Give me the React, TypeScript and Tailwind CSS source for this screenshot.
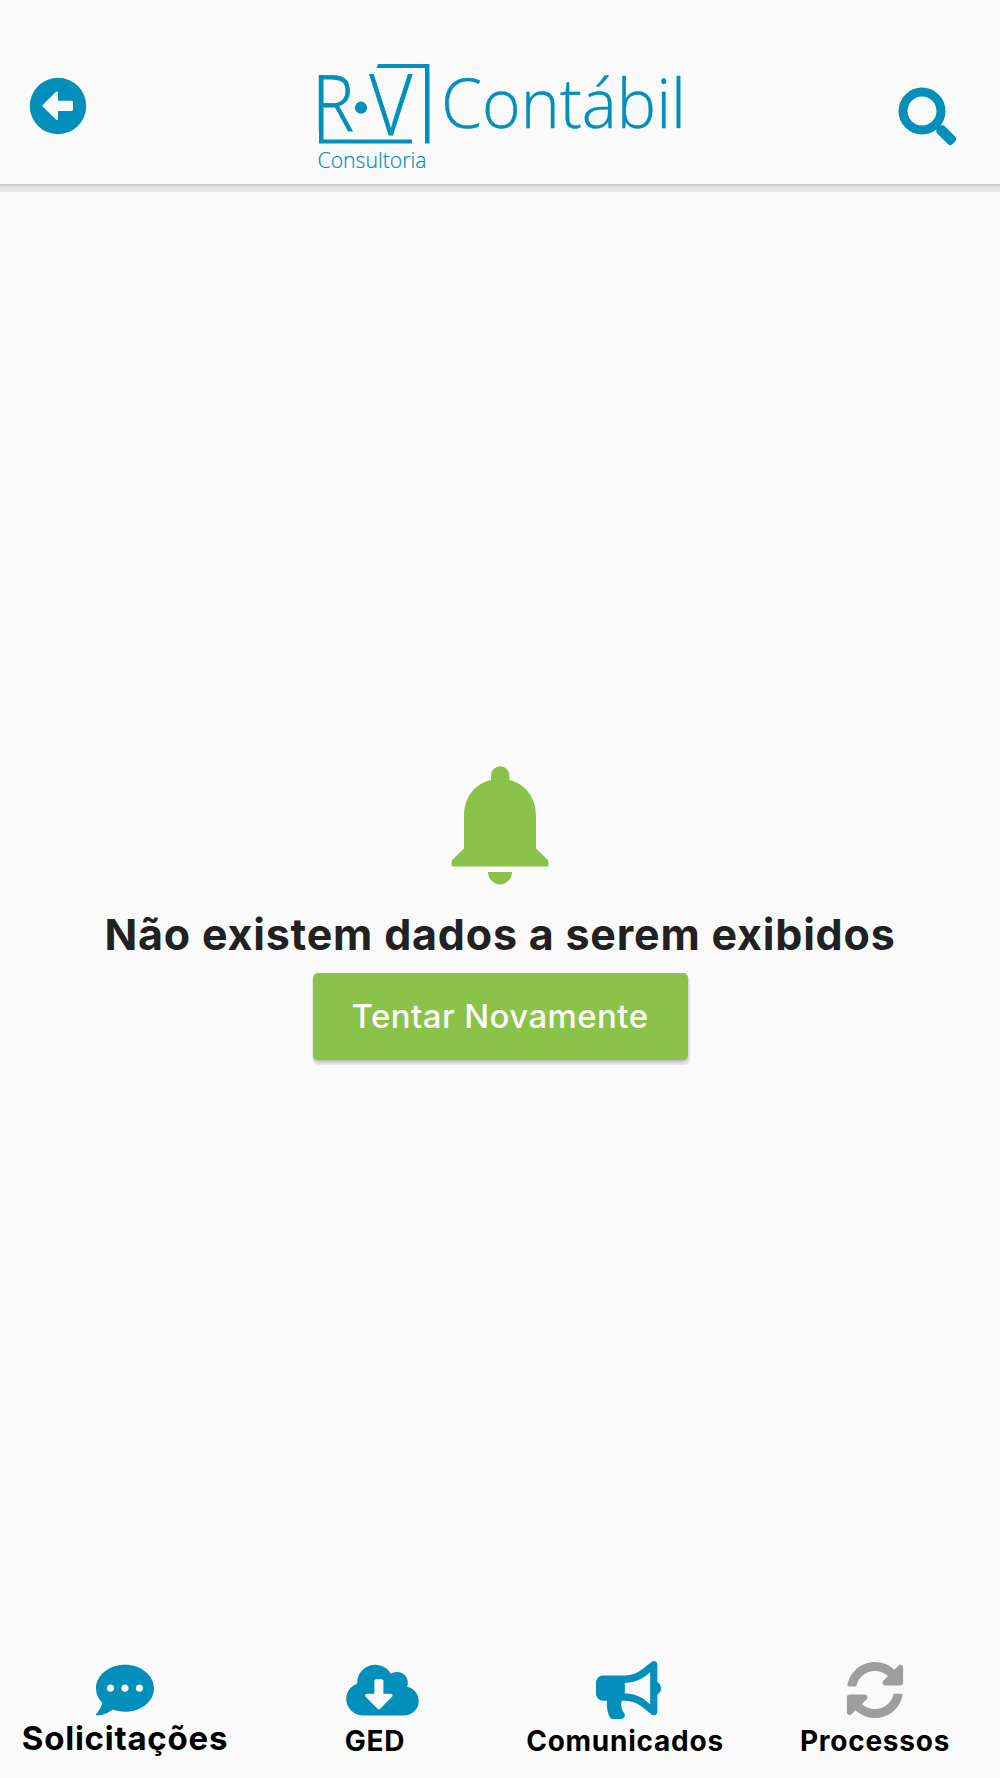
import React from "react";
import {
  FaBullhorn,
  FaCloudDownloadAlt,
  FaCommentDots,
  FaSyncAlt,
} from "react-icons/fa";

const BackIcon: React.FC = () => (
  <svg viewBox="0 0 58 58" className="w-[58px] h-[58px]">
    <circle cx="29" cy="29" r="28.2" fill="#028fbb" />
    <path
      d="M27 14.8 L13.9 27.7 Q13 28.7 13.9 29.7 L27 42.6 Q29 43.8 29 41.4 V34 H42.6 Q44 34 44 32.6 V25.2 Q44 23.8 42.6 23.8 H29 V16 Q29 13.8 27 14.8 Z"
      fill="#fafafa"
    />
  </svg>
);

const SearchIcon: React.FC = () => (
  <svg viewBox="0 0 60 60" className="w-[60px] h-[60px]">
    <circle cx="24" cy="24" r="19" fill="none" stroke="#028fbb" strokeWidth="9" />
    <path
      d="M38.2 43 L42.4 38.6 Q45 37.6 46.8 39.2 L57.6 50 Q59.2 52 57.6 54 L54 57.6 Q52.2 59 50.4 57.6 L39.2 46.4 Q38 45.2 38.2 43 Z"
      fill="#028fbb"
    />
    <path d="M37 37 L42 42" stroke="#028fbb" strokeWidth="6" />
  </svg>
);

const BellIcon: React.FC = () => (
  <svg viewBox="0 0 98 119" className="w-[98px] h-[119px]" fill="#8bc34a">
    <path d="M40 14 V9.5 A9.2 9.2 0 0 1 58.4 9.5 V14 C75 18 85 32 85 50 V82.5 L97.3 94.5 V100.5 H0.7 V94.5 L13 82.5 V50 C13 32 23 18 40 14 Z" />
    <path d="M37 106 H61 A12 12.4 0 0 1 37 106 Z" />
  </svg>
);

const Logo: React.FC = () => (
  <svg
    viewBox="0 0 368 112"
    className="w-[368px] h-[112px] overflow-visible"
    fill="#028fbb"
  >
    {/* Frame */}
    <path d="M60 4 H111.5 V83.5 H107 V8 H58.5 Z" />
    <path d="M1 15 H5.5 V79.5 H94 V83.5 H1 Z" />
    <circle cx="43" cy="47.7" r="6.1" />
    {/* Monogram */}
    <text
      transform="translate(-6 70.5) scale(0.92 1)"
      fontSize="77"
      stroke="#028fbb"
      strokeWidth="0.8"
      className="font-['Open_Sans'] font-light"
    >
      R
    </text>
    <text
      transform="translate(51.5 75) scale(0.88 1)"
      fontSize="84"
      stroke="#028fbb"
      strokeWidth="0.8"
      className="font-['Open_Sans'] font-light"
    >
      V
    </text>
    {/* Name */}
    <text
      x="123"
      y="68"
      fontSize="68"
      textLength="245"
      lengthAdjust="spacingAndGlyphs"
      stroke="#028fbb"
      strokeWidth="0.4"
      className="font-['Open_Sans'] font-light"
    >
      Contábil
    </text>
    <text
      x="-0.5"
      y="108"
      fontSize="22"
      textLength="109"
      lengthAdjust="spacingAndGlyphs"
      stroke="#028fbb"
      strokeWidth="0.2"
      className="font-['Open_Sans'] font-light"
    >
      Consultoria
    </text>
  </svg>
);

const App: React.FC = () => {
  return (
    <div className="flex flex-col w-[1000px] h-[1778px] bg-[#fafafa] font-['Inter',sans-serif] overflow-hidden">
      {/* Header */}
      <header className="flex items-start justify-between h-[184px] shrink-0 pl-[29px] pr-[42px] shadow-[0_2px_2px_#c8c8c8,0_8px_0_#e6e6e6]">
        <button type="button" aria-label="Voltar" className="mt-[77px]">
          <BackIcon />
        </button>
        <div className="mt-[60px] ml-[18px]">
          <Logo />
        </div>
        <button type="button" aria-label="Buscar" className="mt-[86.5px]">
          <SearchIcon />
        </button>
      </header>

      {/* Empty state */}
      <main className="flex-1 flex flex-col items-center pt-[582px]">
        <BellIcon />
        <h1 className="mt-[22px] h-[54px] leading-[54px] text-[43px] font-bold tracking-[0.8px] text-[#212121] whitespace-nowrap">
          Não existem dados a serem exibidos
        </h1>
        <button
          type="button"
          className="mt-[12px] w-[375px] h-[87px] shrink-0 rounded-[5px] bg-[#8bc34a] text-[#fafafa] text-[33px] font-medium tracking-[0.4px] shadow-[0_2px_2px_#bdbdbd,1px_4px_1px_1px_#e4e4e4]"
        >
          Tentar Novamente
        </button>
      </main>

      {/* Bottom navigation */}
      <nav className="grid grid-cols-4 h-[122px] shrink-0 pt-[5px] text-black font-bold">
        <a className="flex flex-col items-center">
          <div className="w-[58px] h-[58px]">
            <FaCommentDots className="size-[58px] text-[#028fbb]" />
          </div>
          <span className="-mt-[1px] h-[40px] leading-[40px] text-[33px] tracking-[0.75px]">
            Solicitações
          </span>
        </a>
        <a className="flex flex-col items-center">
          <div className="w-[58px] h-[58px]">
            <FaCloudDownloadAlt className="w-[73px] h-[58px] max-w-none text-[#028fbb]" />
          </div>
          <span className="mt-[4px] h-[36px] leading-[36px] text-[28px] tracking-[0.75px]">
            GED
          </span>
        </a>
        <a className="flex flex-col items-center">
          <div className="w-[58px] h-[58px]">
            <FaBullhorn className="w-[65px] h-[58px] max-w-none text-[#028fbb]" />
          </div>
          <span className="mt-[4px] h-[36px] leading-[36px] text-[28px] tracking-[0.75px]">
            Comunicados
          </span>
        </a>
        <a className="flex flex-col items-center">
          <div className="w-[58px] h-[58px]">
            <FaSyncAlt className="size-[58px] text-[#9e9e9e]" />
          </div>
          <span className="mt-[4px] h-[36px] leading-[36px] text-[28px] tracking-[0.75px]">
            Processos
          </span>
        </a>
      </nav>
    </div>
  );
};

export default App;
